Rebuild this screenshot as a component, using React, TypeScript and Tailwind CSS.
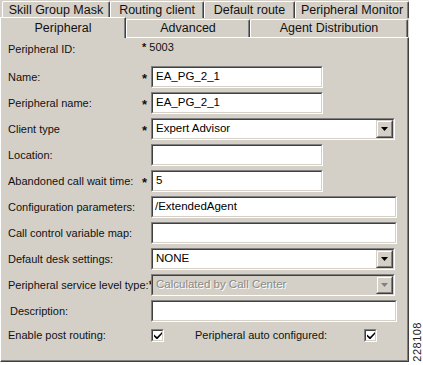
import React from "react";

const Sunken = ({ w, children, disabled }: { w: string; children?: React.ReactNode; disabled?: boolean }) => (
  <div className={`${w} h-[22px] border border-t-[#808080] border-l-[#808080] border-b-white border-r-white`}>
    <div className={`h-full w-full border border-t-[#404040] border-l-[#404040] border-b-[#d4d0c8] border-r-[#d4d0c8] ${disabled ? "bg-[#d4d0c8]" : "bg-white"} flex items-center`}>
      {children}
    </div>
  </div>
);

const DropBtn = ({ disabled }: { disabled?: boolean }) => (
  <div className="h-[18px] w-[17px] border border-t-[#d4d0c8] border-l-[#d4d0c8] border-b-[#404040] border-r-[#404040] bg-[#d4d0c8]">
    <div className="h-full w-full border border-t-white border-l-white border-b-[#808080] border-r-[#808080] flex items-center justify-center">
      <svg width="7" height="4" viewBox="0 0 7 4">
        <path d="M0 0H7L3.5 4Z" fill={disabled ? "#808080" : "#000"} />
      </svg>
    </div>
  </div>
);

const Tab = ({ w, label }: { w: string; label: string }) => (
  <div className={`${w} h-full border-l border-t border-r border-l-white border-t-white border-r-[#404040] shadow-[inset_-1px_0_0_#808080] rounded-tl-[2px] rounded-tr-[2px] flex items-center justify-center text-[12.5px] text-[#111]`}>
    {label}
  </div>
);

const Check = () => (
  <div className="h-[13px] w-[13px] border border-t-[#808080] border-l-[#808080] border-b-white border-r-white">
    <div className="h-full w-full border border-t-[#404040] border-l-[#404040] border-b-[#d4d0c8] border-r-[#d4d0c8] bg-white flex items-center justify-center">
      <svg width="8" height="7" viewBox="0 0 8 7">
        <path d="M0 2.5V4.5L2.5 7H3.5L8 2V0L3 5Z" fill="#000" />
      </svg>
    </div>
  </div>
);

const Row = ({
  label,
  star,
  children,
  lp = "pl-[7px]",
}: {
  label: string;
  star?: boolean;
  children?: React.ReactNode;
  lp?: string;
}) => (
  <div className="flex h-[26px] items-center">
    <div className={`w-[141px] ${lp} whitespace-nowrap`}>{label}</div>
    <div className="w-[9px] text-[13px] font-bold leading-none pt-[3px]">{star ? "*" : ""}</div>
    {children}
  </div>
);

export default function App() {
  return (
    <div className="w-[423px] h-[365px] bg-white flex font-['Liberation_Sans',Arial,sans-serif] text-[11px] text-[#111]">
      <div className="w-[410px] h-[362px] bg-[#d4d0c8] flex flex-col">
        <div className="flex flex-col h-[37px]">
          <div className="flex h-[18px] pl-[2px] pt-[1px]">
            <Tab w="w-[108px]" label="Skill Group Mask" />
            <Tab w="w-[94px]" label="Routing client" />
            <Tab w="w-[91px]" label="Default route" />
            <Tab w="w-[114px]" label="Peripheral Monitor" />
          </div>
          <div className="flex h-[19px]">
            <div className="relative z-10 w-[126px] h-[21px] -mt-[1px] bg-[#d4d0c8] border-l border-t border-r border-l-white border-t-white border-r-[#404040] shadow-[inset_-1px_0_0_#808080] flex items-start justify-center pt-[1px] text-[12.5px]">
              Peripheral
            </div>
            <div className="w-[124px] h-full pt-[1px]">
              <Tab w="w-full" label="Advanced" />
            </div>
            <div className="w-[158px] h-full pt-[1px]">
              <Tab w="w-full" label="Agent Distribution" />
            </div>
          </div>
        </div>
        <div className="flex-1 border border-t-white border-l-white border-r-[#404040] border-b-[#404040] shadow-[inset_-1px_-1px_0_#808080]">
          <div className="flex h-[26px] items-start">
            <div className="w-[141px] pl-[7px] pt-[3px]">Peripheral ID:</div>
            <div className="pt-[1px]">
              <span className="font-bold text-[11px]">*</span> 5003
            </div>
          </div>
          <Row label="Name:" star>
            <Sunken w="w-[172px]">
              <span className="pl-[3px] text-[11.5px] text-black">EA_PG_2_1</span>
            </Sunken>
          </Row>
          <Row label="Peripheral name:" star>
            <Sunken w="w-[172px]">
              <span className="pl-[3px] text-[11.5px] text-black">EA_PG_2_1</span>
            </Sunken>
          </Row>
          <Row label="Client type" star>
            <Sunken w="w-[244px]">
              <span className="pl-[3px] flex-1 text-[11.5px] text-black">Expert Advisor</span>
              <DropBtn />
            </Sunken>
          </Row>
          <Row label="Location:">
            <Sunken w="w-[172px]" />
          </Row>
          <Row label="Abandoned call wait time:" star>
            <Sunken w="w-[172px]">
              <span className="pl-[3px] text-[11.5px] text-black">5</span>
            </Sunken>
          </Row>
          <Row label="Configuration parameters:">
            <Sunken w="w-[246px]">
              <span className="pl-[2px] text-[11.5px] text-black">/ExtendedAgent</span>
            </Sunken>
          </Row>
          <Row label="Call control variable map:">
            <Sunken w="w-[246px]" />
          </Row>
          <Row label="Default desk settings:">
            <Sunken w="w-[244px]">
              <span className="pl-[3px] flex-1 text-[11.5px] text-black">NONE</span>
              <DropBtn />
            </Sunken>
          </Row>
          <div className="flex h-[26px] items-center">
            <div className="w-[150px] pl-[7px] whitespace-nowrap">
              Peripheral service level type:<span className="font-bold text-[13px] leading-none">*</span>
            </div>
            <Sunken w="w-[244px]" disabled>
              <span className="pl-[3px] flex-1 text-[11.5px] text-[#8a8a8a] [text-shadow:1px_1px_0_#fff]">Calculated by Call Center</span>
              <DropBtn disabled />
            </Sunken>
          </div>
          <Row label="Description:" lp="pl-[9px]">
            <Sunken w="w-[246px]" />
          </Row>
          <div className="flex h-[22px] items-center">
            <div className="w-[150px] pl-[7px]">Enable post routing:</div>
            <Check />
            <div className="pl-[31px] w-[200px]">Peripheral auto configured:</div>
            <Check />
          </div>
        </div>
      </div>
      <div className="flex-1 flex flex-col justify-end pb-[3px] items-center">
        <div className="[writing-mode:vertical-rl] rotate-180 text-[11px] text-[#222] tracking-[0.5px]">228108</div>
      </div>
    </div>
  );
}
